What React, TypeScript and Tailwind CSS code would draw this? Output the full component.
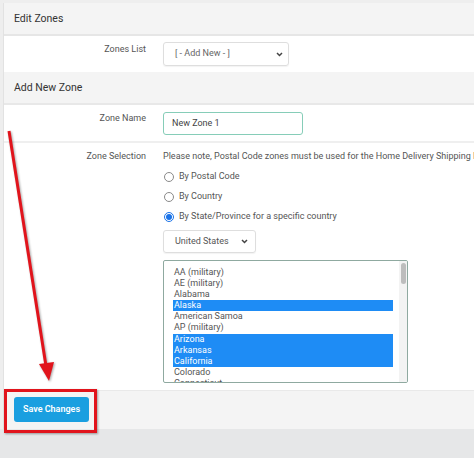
import React from 'react';

const states = [
  { name: 'AA (military)', on: false },
  { name: 'AE (military)', on: false },
  { name: 'Alabama', on: false },
  { name: 'Alaska', on: true },
  { name: 'American Samoa', on: false },
  { name: 'AP (military)', on: false },
  { name: 'Arizona', on: true },
  { name: 'Arkansas', on: true },
  { name: 'California', on: true },
  { name: 'Colorado', on: false },
  { name: 'Connecticut', on: false },
];

const Chevron: React.FC = () => (
  <svg width="7" height="5" viewBox="0 0 7 5" className="shrink-0">
    <path d="M1 1l2.5 2.5L6 1" fill="none" stroke="#444" strokeWidth="1.5" />
  </svg>
);

const Radio: React.FC<{ label: string; checked?: boolean }> = ({ label, checked }) => (
  <div className="h-[20px] flex items-center gap-[5px] pt-[1px]">
    <span
      className={`w-[10px] h-[10px] rounded-full border flex items-center justify-center ${
        checked ? 'border-[#1a73e8]' : 'border-[#8a8a8a]'
      }`}
    >
      {checked && <span className="w-[6px] h-[6px] rounded-full bg-[#1a73e8]" />}
    </span>
    <span>{label}</span>
  </div>
);

const App: React.FC = () => {
  return (
    <div className="relative w-[474px] h-[458px] overflow-hidden bg-[#eeeeee] pt-[3px] text-[#555] font-['Roboto',sans-serif] text-[9px]">
      <div className="ml-[3px] border-l border-[#e2e2e2] bg-white">
        <div className="h-[33px] flex items-center pl-[10px] bg-[#f4f4f4] text-[10.5px] text-[#333] border-b-2 border-[#e6e6e6]">
          Edit Zones
        </div>

        <div className="h-[36px] flex items-start">
          <div className="w-[142px] text-right pt-[3px] leading-[20px]">Zones List</div>
          <div className="ml-[17px] mt-[6px] w-[126px] h-[24px] border border-[#dedede] rounded-[3px] shadow-[0_1px_1px_rgba(0,0,0,0.05)] flex items-center justify-between pl-[11px] pr-[5px] text-[#666]">
            <span>[ - Add New - ]</span>
            <Chevron />
          </div>
        </div>

        <div className="h-[33px] flex items-center pl-[10px] bg-[#f4f4f4] text-[10.5px] text-[#333] border-b-2 border-[#e8e8e8]">
          Add New Zone
        </div>

        <div className="h-[38px] flex items-start border-b-2 border-[#efefef]">
          <div className="w-[142px] text-right pt-[3px] leading-[20px]">Zone Name</div>
          <div className="ml-[17px] mt-[7px] w-[140px] h-[23px] border border-[#86cdb8] rounded-[3px] flex items-center pl-[8px] text-[#444]">
            New Zone 1
          </div>
        </div>

        <div className="flex items-start pt-[3px] pb-[7px] whitespace-nowrap">
          <div className="w-[142px] text-right leading-[20px] shrink-0">Zone Selection</div>
          <div className="ml-[17px] flex flex-col">
            <div className="leading-[20px]">
              Please note, Postal Code zones must be used for the Home Delivery Shipping Method.
            </div>
            <div className="pl-[1px]">
              <Radio label="By Postal Code" />
              <Radio label="By Country" />
              <Radio label="By State/Province for a specific country" checked />
            </div>
            <div className="mt-[4px] w-[93px] h-[23px] border border-[#dedede] rounded-[3px] shadow-[0_1px_1px_rgba(0,0,0,0.05)] flex items-center justify-between pl-[11px] pr-[7px] text-[#555]">
              <span>United States</span>
              <Chevron />
            </div>
            <div className="mt-[7px] w-[245px] h-[123px] border border-[#8fa9a0] rounded-[2px] flex overflow-hidden">
              <div className="flex-1 pl-[9px] pr-[6px] pt-[6px] text-[9px] leading-[11.1px] text-[#555]">
                {states.map((s) => (
                  <div
                    key={s.name}
                    className={`pl-[1px] ${s.on ? 'bg-[#1e8cf5] text-white' : ''}`}
                  >
                    {s.name}
                  </div>
                ))}
              </div>
              <div className="w-[8px] bg-[#f3f3f3] pt-[2px] flex justify-center">
                <div className="w-[5px] h-[21px] rounded-[3px] bg-[#bdbdbd]" />
              </div>
            </div>
          </div>
        </div>

        <div className="h-[39px] bg-[#f4f4f4] border-t border-[#e9e9e9] pl-[10px] pt-[6px]">
          <button className="w-[75px] h-[25px] rounded-[3px] bg-[#1a9fe0] text-white font-semibold text-[9px]">
            Save Changes
          </button>
        </div>
      </div>
      <div className="h-[30px] bg-[#e6e7e8]" />

      <div className="absolute left-[4px] top-[389px] w-[93px] h-[44px] border-[3px] border-[#e1141c] shadow-[1px_1px_2px_rgba(0,0,0,0.35)]" />
      <svg
        className="absolute left-0 top-0 pointer-events-none"
        width="474"
        height="458"
        viewBox="0 0 474 458"
        style={{ filter: 'drop-shadow(1px 1px 1px rgba(0,0,0,0.35))' }}
      >
        <line x1="9" y1="131" x2="46" y2="366" stroke="#e1141c" strokeWidth="3" />
        <polygon points="39,364 54,362 49,381" fill="#e1141c" />
      </svg>
    </div>
  );
};

export default App;
